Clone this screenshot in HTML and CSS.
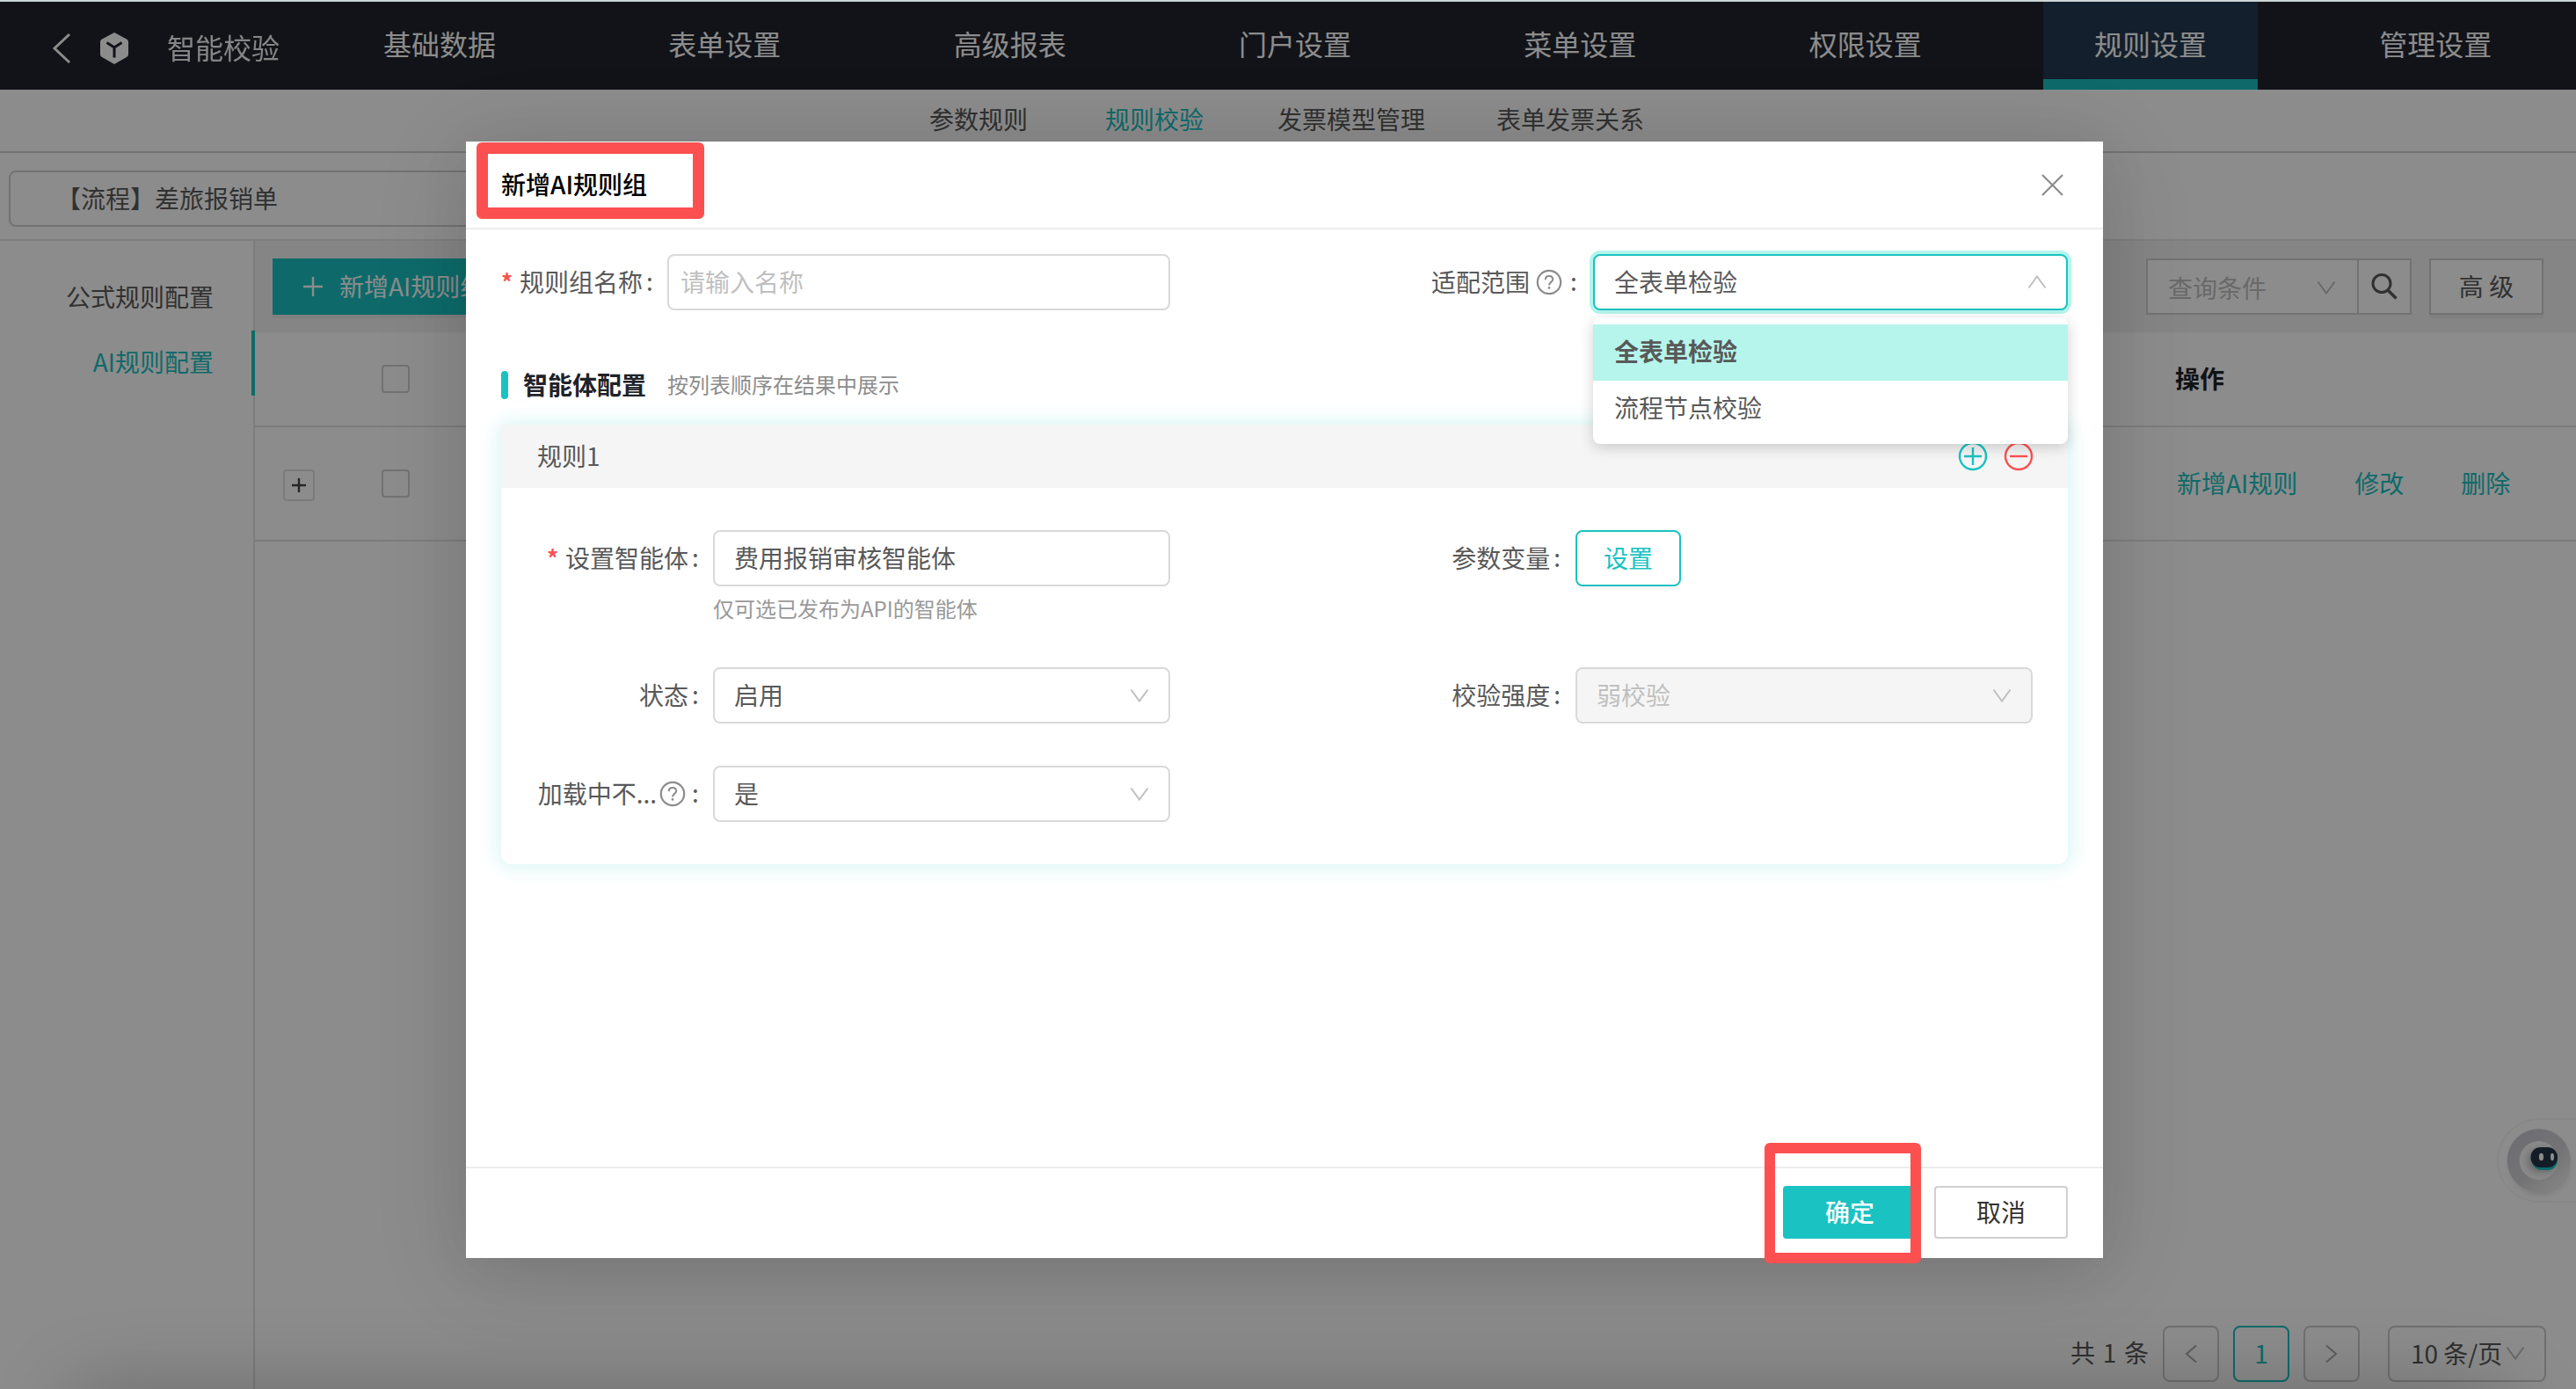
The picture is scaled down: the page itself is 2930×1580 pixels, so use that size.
FILE: index.html
```html
<!DOCTYPE html>
<html lang="zh-CN">
<head>
<meta charset="utf-8">
<title>智能校验</title>
<link rel="stylesheet" href="styles.css">
</head>
<body>
<svg width="0" height="0" class="defs">
  <symbol id="down" viewBox="0 0 22 16"><path d="M1.5 1.5 11 14.5 20.5 1.5" fill="none" stroke="currentColor" stroke-width="2"/></symbol>
  <symbol id="help" viewBox="0 0 30 30"><circle cx="15" cy="15" r="13.2" fill="none" stroke="currentColor" stroke-width="2.2"/><path d="M10.8 12.2c0-2.600 1.800-4.300 4.200-4.300s4.200 1.600 4.200 3.900c0 3-4.200 3.200-4.200 6.600" fill="none" stroke="currentColor" stroke-width="2"/><circle cx="15" cy="21.400" r="1.400" fill="currentColor"/></symbol>
</svg>

<div class="app">
  <header class="topbar">
    <div class="brand">
      <svg class="back" width="22" height="36" viewBox="0 0 22 36"><path d="M20 2 3 18 20 34" fill="none" stroke="#fff" stroke-width="3"/></svg>
      <svg class="logo" width="34" height="38" viewBox="0 0 34 38"><path d="M17 1 31 8.500q2 1 2 3V26q0 2-2 3L17 37 3 29q-2-1-2-3V11.500q0-2 2-3Z" fill="#fff"/><path d="M8.500 12.500 17 18l8.500-5.500M17 18v11.500" fill="none" stroke="#20232c" stroke-width="3"/></svg>
      <span class="brand-name">智能校验</span>
    </div>
    <nav class="nav">
      <a>基础数据</a><a>表单设置</a><a>高级报表</a><a>门户设置</a><a>菜单设置</a><a>权限设置</a><a class="on">规则设置</a><a>管理设置</a>
    </nav>
  </header>
  <nav class="subnav"><a>参数规则</a><a class="on">规则校验</a><a>发票模型管理</a><a>表单发票关系</a></nav>
  <div class="formbar"><div class="form-pick">【流程】差旅报销单</div></div>
  <div class="body">
    <aside class="side"><a>公式规则配置</a><a class="on">AI规则配置</a></aside>
    <main class="main">
      <div class="toolbar">
        <button class="add"><svg width="24" height="24" viewBox="0 0 24 24"><path d="M12 1v22M1 12h22" stroke="#fff" stroke-width="2.400"/></svg><span>新增AI规则组</span></button>
        <div class="tools">
          <div class="query"><span>查询条件</span><svg width="22" height="16"><use href="#down"/></svg></div>
          <div class="find"><svg width="32" height="32" viewBox="0 0 32 32"><circle cx="13" cy="12.500" r="10" fill="none" stroke="#595959" stroke-width="3"/><path d="m20 20 9.500 9.500" stroke="#595959" stroke-width="3.600"/></svg></div>
          <div class="adv">高 级</div>
        </div>
      </div>
      <div class="row head"><i class="expand none"></i><i class="check"></i><b class="ops-title">操作</b></div>
      <div class="row"><i class="expand"><svg width="16" height="16" viewBox="0 0 16 16"><path d="M8 0v16M0 8h16" stroke="#444" stroke-width="2.400"/></svg></i><i class="check"></i><div class="ops"><a>新增AI规则</a><a>修改</a><a>删除</a></div></div>
      <footer class="pager">
        <span class="total">共 1 条</span>
        <span class="pg"><svg width="14" height="22" viewBox="0 0 14 22"><path d="M13 1.500 2 11l11 9.500" fill="none" stroke="#aaa" stroke-width="2"/></svg></span>
        <span class="pg on">1</span>
        <span class="pg"><svg width="14" height="22" viewBox="0 0 14 22"><path d="M1 1.500 12 11 1 20.500" fill="none" stroke="#aaa" stroke-width="2"/></svg></span>
        <span class="size">10 条/页<svg width="22" height="16"><use href="#down"/></svg></span>
      </footer>
    </main>
  </div>
  <div class="bot">
    <svg width="90" height="98" viewBox="0 0 90 98">
      <defs>
        <linearGradient id="ring" x1="0" y1="0" x2=".8" y2="1"><stop offset="0" stop-color="#c6c7d0"/><stop offset=".6" stop-color="#d2d2d6"/><stop offset="1" stop-color="#f2f2f2"/></linearGradient>
        <filter id="soft" x="-30%" y="-30%" width="160%" height="160%"><feGaussianBlur stdDeviation="4"/></filter>
      </defs>
      <circle cx="49" cy="53" r="33" fill="#bbb" opacity=".6" filter="url(#soft)"/>
      <circle cx="47.700" cy="48" r="36" fill="url(#ring)"/>
      <circle cx="47.700" cy="48" r="22" fill="#fafafa"/>
      <rect x="36" y="36" width="30" height="25" rx="11" fill="#b5b5b5" filter="url(#soft)"/>
      <rect x="40" y="34" width="29" height="25" rx="11" fill="#1ac2c2"/>
      <rect x="38.500" y="33" width="30.500" height="23" rx="11" fill="#24364a"/>
      <ellipse cx="50.500" cy="44" rx="2.600" ry="4.200" fill="#fff"/><ellipse cx="63" cy="44" rx="2" ry="4.200" fill="#fff"/>
    </svg>
  </div>
  <div class="edge-shade"></div>
</div>

<div class="mask">
  <section class="modal">
    <header class="m-head"><h1>新增AI规则组</h1><svg width="25" height="25" viewBox="0 0 25 25"><path d="m1 1 23 23M24 1 1 24" stroke="#8c8c8c" stroke-width="2.200"/></svg></header>
    <div class="m-body">
      <div class="line first">
        <div class="field">
          <label class="lab l1"><em>*</em>规则组名称<s>:</s></label>
          <div class="input wide ph">请输入名称</div>
        </div>
        <div class="field right">
          <label class="lab range">适配范围<svg class="q" width="30" height="30"><use href="#help"/></svg><s>:</s></label>
          <div class="input scope">全表单检验<svg class="up" width="22" height="16"><use href="#down"/></svg>
            <div class="menu"><div class="opt on">全表单检验</div><div class="opt">流程节点校验</div></div>
          </div>
        </div>
      </div>
      <div class="section"><i></i><h2>智能体配置</h2><span>按列表顺序在结果中展示</span></div>
      <div class="card">
        <div class="c-head"><span>规则1</span>
          <svg width="100" height="34" viewBox="0 0 100 34"><g fill="none" stroke-width="2.400"><g stroke="#1ac2c2"><circle cx="17" cy="17" r="15"/><path d="M17 7v20M7 17h20"/></g><g stroke="#fc5050"><circle cx="69" cy="17" r="15"/><path d="M59 17h20"/></g></g></svg>
        </div>
        <div class="c-body">
          <div class="line a">
            <div class="field"><label class="lab l2"><em>*</em>设置智能体<s>:</s></label><div class="input">费用报销审核智能体</div></div>
            <div class="field r2"><label class="lab l3">参数变量<s>:</s></label><button class="set">设置</button></div>
          </div>
          <p class="hint">仅可选已发布为API的智能体</p>
          <div class="line b">
            <div class="field"><label class="lab l2">状态<s>:</s></label><div class="input">启用<svg width="22" height="16"><use href="#down"/></svg></div></div>
            <div class="field r2"><label class="lab l3">校验强度<s>:</s></label><div class="input off">弱校验<svg width="22" height="16"><use href="#down"/></svg></div></div>
          </div>
          <div class="line c">
            <div class="field"><label class="lab l2 loading">加载中不...<svg class="q" width="30" height="30"><use href="#help"/></svg><s>:</s></label><div class="input">是<svg width="22" height="16"><use href="#down"/></svg></div></div>
          </div>
        </div>
      </div>
    </div>
    <footer class="m-foot"><button class="ok">确定</button><button class="cancel">取消</button></footer>
  </section>
</div>
<div class="top-line"></div>
<div class="mark mark-title"></div>
<div class="mark mark-ok"></div>
</body>
</html>
```

FILE: styles.css
```css
* { box-sizing: border-box; }
html { overflow: hidden; }
body {
  margin: 0; width: 2930px; height: 1580px; overflow: hidden; position: relative;
  background: #fff; color: #595959;
  font: 28px/40px "Noto Sans CJK SC", sans-serif;
}
.defs { position: absolute; }
svg { display: block; flex: none; }
h1, h2, p { margin: 0; }
i, em, s { font-style: normal; text-decoration: none; }
button { font: inherit; padding: 0; cursor: pointer; }

.app { width: 2930px; height: 1580px; display: flex; flex-direction: column; position: relative; overflow: hidden; }
.top-line { position: absolute; top: 0; left: 0; width: 100%; height: 2px; background: #cdd5d6; z-index: 5; }

.topbar { height: 102px; background: #20232c; display: flex; color: #fff; font-size: 32px; padding-top: 2px; flex: none; }
.brand { width: 378px; display: flex; align-items: center; padding: 6px 0 0 59px; flex: none; }
.logo { margin-left: 32px; }
.brand-name { margin: -4px 0 0 43px; opacity: .95; }
.nav { display: flex; gap: 80.33px; }
.nav a { width: 244px; height: 100px; line-height: 95px; text-align: center; flex: none; }
.nav .on { background: #243a50; border-bottom: 12px solid #1ac2c2; }

.subnav { height: 72px; flex: none; border-bottom: 2px solid #d0d0d0; display: flex; gap: 84px; padding-left: 1057px; line-height: 67px; }
.subnav .on { color: #1ac2c2; margin-left: 4px; }
.subnav a:last-child { margin-left: -3px; }

.formbar { height: 100px; flex: none; border-bottom: 2px solid #e6e6e6; padding: 20px 0 0 10px; }
.form-pick { width: 900px; height: 64px; border: 2px solid #d0d0d0; border-radius: 8px; padding-left: 52px; line-height: 58px; }

.body { flex: 1; display: flex; min-height: 0; }
.side { width: 290px; border-right: 2px solid #e2e2e2; padding-top: 28px; flex: none; display: flex; flex-direction: column; }
.side a { height: 74px; line-height: 71px; text-align: right; padding-right: 47px; margin-right: -2px; }
.side .on { color: #1ac2c2; border-right: 4px solid #1ac2c2; padding-right: 43px; }

.main { flex: 1; display: flex; flex-direction: column; min-width: 0; }
.toolbar { height: 104px; background: #f2f2f2; padding: 20px 37px 0 20px; display: flex; justify-content: space-between; flex: none; }
.add { width: 248px; height: 64px; border: 0; background: #1ac2c2; color: #fff; display: flex; align-items: center; gap: 18px; padding-left: 34px; box-shadow: 0 4px 0 rgba(0,0,0,.04); white-space: nowrap; }
.add span { margin-top: -3px; }
.tools { display: flex; }
.query, .find, .adv { height: 64px; border: 2px solid #d0d0d0; background: #fff; display: flex; align-items: center; }
.query { width: 240px; padding: 2px 24px 0 23px; justify-content: space-between; color: #bfbfbf; border-right: 0; }
.find { width: 62px; justify-content: center; }
.adv { width: 130px; margin-left: 20px; padding-bottom: 3px; justify-content: center; box-shadow: 0 4px 0 rgba(0,0,0,.03); }
.row { height: 130px; border-bottom: 2px solid #e2e2e2; display: flex; align-items: center; flex: none; padding-left: 32px; }
.row.head { height: 108px; color: #1f2329; }
.expand { width: 36px; height: 36px; margin-top: 4px; border: 2px solid #e0e0e0; border-radius: 4px; display: flex; align-items: center; justify-content: center; }
.expand.none { visibility: hidden; }
.check { width: 32px; height: 32px; border: 2px solid #d0d0d0; border-radius: 4px; margin-left: 76px; }
.ops-title { margin: -3px 0 0 2008px; font-weight: 600; }
.ops { margin: -3px 0 0 2010px; display: flex; gap: 65px; color: #1ac2c2; }
.pager { margin-top: auto; padding: 0 34px 8px 0; height: 72px; display: flex; justify-content: flex-end; align-items: center; gap: 16px; }
.total { word-spacing: 2.500px; padding-bottom: 4px; }
.pg { width: 64px; height: 64px; border: 2px solid #ccc; border-radius: 8px; display: flex; align-items: center; justify-content: center; }
.pg.on { border-color: #1ac2c2; color: #1ac2c2; padding-bottom: 3px; }
.size { width: 180px; height: 64px; border: 2px solid #ccc; border-radius: 8px; margin-left: 16px; padding: 0 0 2px 24px; display: flex; align-items: center; gap: 4px; white-space: nowrap; }
.size svg { color: #bfbfbf; }

.bot { position: absolute; left: 2840px; top: 1272px; width: 90px; height: 96px; border: 2px solid #f6f6f6; border-right: 0; border-radius: 48px 0 0 48px; }
.bot svg { margin: -2px; }
.edge-shade { position: absolute; left: 90px; top: 1590px; width: 2750px; height: 100px; box-shadow: 0 0 90px 10px rgba(0,0,0,.24); }

.mask { position: absolute; inset: 0; background: rgba(0,0,0,.45); padding: 161px 0 0 530px; }
.modal { width: 1862px; height: 1270px; background: #fff; box-shadow: 0 16px 100px rgba(0,0,0,.13), 0 8px 60px rgba(0,0,0,.06); display: flex; flex-direction: column; position: relative; }
.m-head { height: 100px; border-bottom: 2px solid #ededed; padding: 0 45px 0 40px; display: flex; align-items: center; justify-content: space-between; flex: none; }
.m-head h1 { font-size: 28px; font-weight: 500; color: #000; margin-top: -2px; }
.m-body { flex: 1; padding: 28px 40px 0; }
.m-foot { height: 104px; border-top: 2px solid #ededed; padding: 20px 40px; display: flex; justify-content: flex-end; gap: 20px; flex: none; }
.m-foot button { width: 152px; height: 60px; border-radius: 4px; line-height: 54px; padding-bottom: 2px; }
.m-foot .ok { background: #1ac2c2; border: 2px solid #1ac2c2; color: #fff; font-weight: 500; }
.m-foot .cancel { background: #fff; border: 2px solid #d0d0d0; color: #333; }

.line, .field { display: flex; }
.line { justify-content: space-between; }
.lab { display: flex; align-items: center; justify-content: flex-end; height: 64px; padding-bottom: 3px; white-space: nowrap; }
.lab em { color: #fc5050; width: 21px; font-size: 26px; font-weight: 700; }
.lab s { width: 8px; margin: -2px 16px 0 4px; }
.lab .q { margin: 3px 0 0 6px; color: #8c8c8c; }
.lab .q + s { margin-left: 9px; }
.range .q { margin-left: 7px; }
.range s { margin-right: 18px; }
.loading .q { margin-left: 3px; }
.loading .q + s { margin-left: 7px; }
.l1 { width: 189px; }
.l2 { width: 201px; }
.input { width: 520px; height: 64px; border: 2px solid #d9d9d9; border-radius: 8px; padding: 0 22px 3px 22px; display: flex; align-items: center; justify-content: space-between; background: #fff; }
.input svg { color: #bfbfbf; margin-top: 2px; }
.wide { width: 572px; }
.input.ph { color: #bfbfbf; padding-left: 13px; }
.scope { width: 540px; border-color: #1ac2c2; box-shadow: 0 0 0 4px #b5f5ec; position: relative; }
.up { transform: rotate(180deg); }
.off { background: #f5f5f5; color: #bfbfbf; }
.menu { position: absolute; left: -2px; top: 70px; width: 540px; height: 144px; padding: 8px 0; background: #fff; border-radius: 8px; box-shadow: 0 4px 16px rgba(0,0,0,.18); z-index: 3; }
.opt { height: 64px; line-height: 61px; padding-left: 24px; }
.opt.on { background: #b5f5ec; font-weight: 600; }

.section { margin-top: 65px; height: 40px; display: flex; align-items: center; }
.section i { width: 8px; height: 32px; border-radius: 4px; background: #1ac2c2; }
.section h2 { font-size: 28px; font-weight: 600; color: #1f2329; margin: -3px 0 0 17px; width: 164px; }
.section span { font-size: 24px; color: #8c8c8c; margin-top: -2px; }
.card { margin-top: 25px; height: 500px; border-radius: 12px; background: #fff; box-shadow: 0 0 20px 4px rgba(26,194,194,.16); }
.c-head { height: 72px; background: #f5f5f5; padding: 0 25px 0 41px; display: flex; justify-content: space-between; align-items: center; }
.c-head span { margin-top: -3px; }
.c-body { padding: 48px 40px 0; }
.hint { margin: 5px 0 0 201px; font-size: 24px; color: #999; }
.line.b { margin-top: 47px; }
.line.c { margin-top: 48px; }
.r2 .lab { width: 140px; }
.r2 .lab s { margin-right: 17px; }
.r2 { width: 660px; }
.set { width: 120px; height: 64px; padding-bottom: 3px; border: 2px solid #1ac2c2; border-radius: 8px; background: #fff; color: #1ac2c2; box-shadow: 0 4px 0 rgba(0,0,0,.03); }

.mark { position: absolute; border: 13px solid #fc5050; border-radius: 6px; }
.mark-title { left: 542px; top: 162px; width: 259px; height: 87px; }
.mark-ok { left: 2007px; top: 1300px; width: 178px; height: 137px; border-width: 12px; }
```
